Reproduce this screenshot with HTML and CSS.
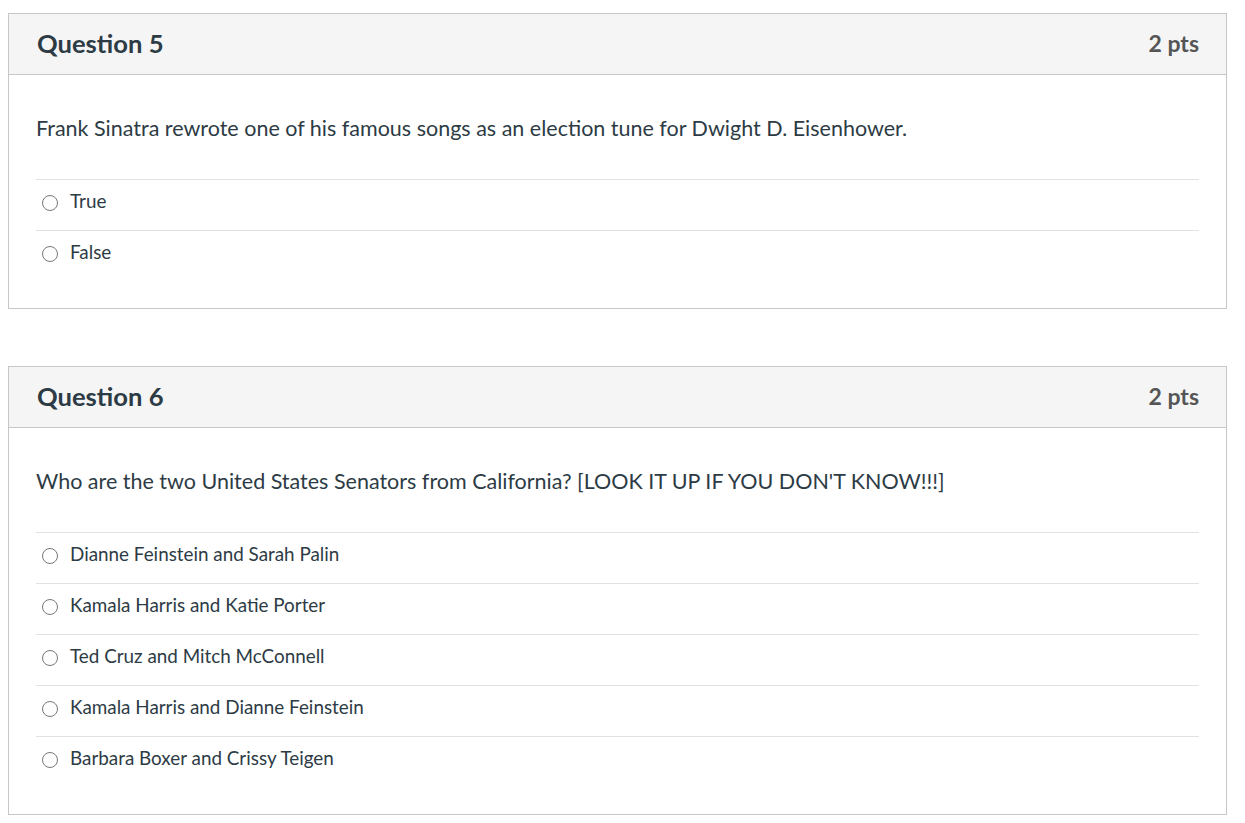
FILE: index.html
```html
<!DOCTYPE html>
<html lang="en">

<head>
  <meta charset="UTF-8">
  <meta name="viewport" content="width=device-width, initial-scale=1.0">
  <title>Quiz</title>
  <link rel="stylesheet" href="styles.css">
</head>

<body>
  <!-- 第5题 -->
  <div class="question">
    <div class="header">
      <span class="name">Question 5</span>
      <span class="points">2 pts</span>
    </div>
    <div class="content">
      <p class="text">Frank Sinatra rewrote one of his famous songs as an election tune for Dwight D. Eisenhower.</p>
      <div class="answers">
        <label class="answer"><input type="radio" name="q5"><span>True</span></label>
        <label class="answer"><input type="radio" name="q5"><span>False</span></label>
      </div>
    </div>
  </div>

  <!-- 第6题 -->
  <div class="question">
    <div class="header">
      <span class="name">Question 6</span>
      <span class="points">2 pts</span>
    </div>
    <div class="content">
      <p class="text">Who are the two United States Senators from California? [LOOK IT UP IF YOU DON'T KNOW!!!]</p>
      <div class="answers">
        <label class="answer"><input type="radio" name="q6"><span>Dianne Feinstein and Sarah Palin</span></label>
        <label class="answer"><input type="radio" name="q6"><span>Kamala Harris and Katie Porter</span></label>
        <label class="answer"><input type="radio" name="q6"><span>Ted Cruz and Mitch McConnell</span></label>
        <label class="answer"><input type="radio" name="q6"><span>Kamala Harris and Dianne Feinstein</span></label>
        <label class="answer"><input type="radio" name="q6"><span>Barbara Boxer and Crissy Teigen</span></label>
      </div>
    </div>
  </div>
</body>

</html>
```

FILE: styles.css
```css
body {
  margin: 0;
  padding: 13px 18px 0 8px;
  background-color: #fff;
  font-family: Lato, "Open Sans", sans-serif;
  color: #2d3b45;
}

.question {
  border: 1px solid #c7c7c7;
  margin-bottom: 57px;
}

.question:last-child {
  margin-bottom: 0;
}

.header {
  display: flex;
  justify-content: space-between;
  align-items: center;
  height: 57px;
  padding: 0 27px 3px 28px;
  background-color: #f5f5f5;
  border-bottom: 1px solid #c7c7c7;
}

.header .name {
  font-size: 25.6px;
  font-weight: bold;
}

.header .points {
  font-size: 23px;
  font-weight: bold;
  color: #555;
}

.content {
  padding: 38px 27px 27px 27px;
}

.text {
  margin: 0 0 36px;
  font-size: 21.5px;
  line-height: 30px;
}

.answer {
  display: flex;
  align-items: flex-start;
  height: 41px;
  padding-top: 9px;
  border-top: 1px solid #e2e2e2;
  font-size: 18.85px;
  line-height: 24px;
}

.answer input {
  appearance: none;
  flex-shrink: 0;
  width: 16px;
  height: 16px;
  margin: 6px 12px 0 6px;
  border: 1.5px solid #777;
  border-radius: 50%;
  background-color: #fff;
}
```
